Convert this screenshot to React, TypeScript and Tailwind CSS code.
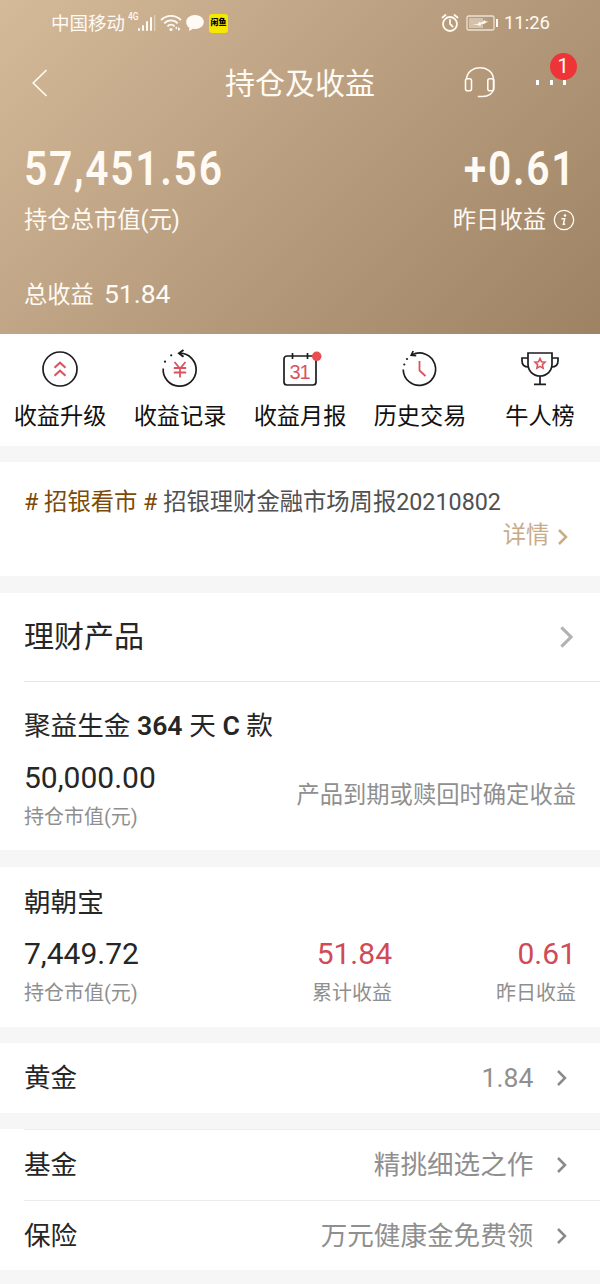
import type { ReactNode } from "react";

const INK = "#1d1d1f";
const RED = "#d9535f";

function Chevron({ className, size = 16, width = 2 }: { className?: string; size?: number; width?: number }) {
  return (
    <svg
      className={className}
      width={size * 0.6}
      height={size}
      viewBox="0 0 9.6 16"
      fill="none"
      stroke="currentColor"
      strokeWidth={width}
    >
      <path d="M1 1l7 7-7 7" />
    </svg>
  );
}

function StatusBar() {
  return (
    <div className="flex h-[46px] items-center justify-between pl-[51px] pr-[50px]">
      <div className="flex items-center">
        <span className="mt-[2px] text-[18.5px] leading-[24px]">中国移动</span>
        <span className="ml-[3px] -mt-[12px] w-[11px] origin-left scale-x-[.85] text-[10px] font-medium leading-[10px]">4G</span>
        <svg className="-ml-[2px]" width="19" height="18" viewBox="0 0 19 18" fill="currentColor">
          <rect x="1" y="14" width="2" height="3" rx="1" />
          <rect x="5" y="11" width="2" height="6" rx="1" />
          <rect x="9" y="7" width="2" height="10" rx="1" />
          <rect x="13" y="3" width="2" height="14" rx="1" />
          <rect x="17" y="1" width="1.4" height="16" opacity="0.4" />
        </svg>
        <svg className="ml-[4px]" width="22" height="18" viewBox="0 0 22 18" fill="none" stroke="currentColor" strokeWidth="1.8">
          <path d="M1 6.200C6.500.5 15.500.5 21 6.200" />
          <path d="M4.300 9.300C8 5.500 14 5.500 17.700 9.300" />
          <path d="M7.400 12.300C9.500 10.200 12.500 10.200 14.600 12.300" />
          <circle cx="11" cy="15.500" r="1.600" fill="currentColor" stroke="none" />
          <path d="M15 14l2-1.500v3zM18 13l2.500 2-2.500 2z" fill="currentColor" stroke="none" />
        </svg>
        <svg className="ml-[4px]" width="18" height="18" viewBox="0 0 18 18" fill="currentColor">
          <path d="M9 1c5 0 8.800 3 8.800 7s-3.800 7-8.800 7c-.8 0-1.600-.1-2.300-.2-1 1-2.400 1.700-4 2 .6-1 .8-2 .6-3C1.300 12.500.2 10.400.2 8 .2 4 4 1 9 1z" />
        </svg>
        <span className="ml-[5px] flex h-[19px] w-[19px] items-center justify-center rounded-[3px] bg-[#f7e600] text-[8px] font-black leading-none text-black">
          闲鱼
        </span>
      </div>
      <div className="flex items-center">
        <svg width="18" height="19" viewBox="0 0 18 19" fill="none" stroke="currentColor" strokeWidth="1.800" strokeLinecap="round">
          <circle cx="9" cy="10" r="7" />
          <path d="M9 6v4l2.500 2.500M1.500 3.500l3-2.500M16.500 3.500l-3-2.500" />
        </svg>
        <svg className="ml-[7px]" width="33" height="17" viewBox="0 0 33 17" fill="none">
          <rect x="1" y="1" width="27" height="14" rx="1.500" stroke="currentColor" strokeWidth="1.300" opacity="0.75" />
          <rect x="3" y="3" width="14" height="10" fill="currentColor" opacity="0.4" />
          <path d="M6 9h6l1-2 2 .8 4-2.800.5 1.500h3l-5 2.500-2-.3-1.500 2.300-2-1z" fill="currentColor" />
          <rect x="30" y="4" width="2" height="8" fill="currentColor" />
        </svg>
        <span className="ml-[5px] text-[18.5px] leading-[24px]">11:26</span>
      </div>
    </div>
  );
}

function NavBar() {
  return (
    <div className="relative flex h-[74px] items-center justify-between pl-[32px] pr-[34px]">
      <svg width="16" height="28" viewBox="0 0 16 28" fill="none" stroke="currentColor" strokeWidth="1.700">
        <path d="M14.500 1L1.200 14l13.300 13" />
      </svg>
      <h1 className="absolute inset-x-0 mt-[2px] text-center text-[30px] leading-[40px]">持仓及收益</h1>
      <div className="flex items-center">
        <svg className="-mt-[2px]" width="32" height="32" viewBox="0 0 32 32" fill="none" stroke="currentColor" strokeWidth="1.600">
          <path d="M2.500 13C3 6.500 8.500 1.800 16 1.800S29 6.500 29.500 13v10c-.5 4.500-5 7.500-11 7.500h-4.700" />
          <rect x="1.500" y="12.700" width="6" height="12" rx="2" />
          <rect x="23.800" y="12.700" width="6" height="12" rx="2" />
        </svg>
        <div className="relative -mt-[2px] ml-[40px] flex gap-[10.500px]">
          <i className="h-[5px] w-[3px] bg-white" />
          <i className="ml-[.5px] h-[5px] w-[3px] bg-white" />
          <i className="h-[5px] w-[3px] bg-white" />
          <span className="absolute -top-[27px] left-[14px] flex h-[27px] w-[27px] items-center justify-center rounded-full bg-[#ee3437] text-[20px] leading-none">
            1
          </span>
        </div>
      </div>
    </div>
  );
}

function Header() {
  return (
    <header className="h-[334px] bg-[linear-gradient(135deg,#d5ba99_0%,#b99f80_48%,#9d8263_100%)] text-[#fffaf3]">
      <StatusBar />
      <NavBar />
      <div className="mt-[25px] flex h-12 items-center justify-between px-6 text-[48px] font-semibold leading-[48px]">
        <span className="origin-left scale-x-[.85] tracking-[2px]">57,451.56</span>
        <span className="origin-right scale-x-[.85] tracking-[2px]">+0.61</span>
      </div>
      <div className="mt-[11px] flex h-8 items-center justify-between pl-6 pr-[25px] text-[23.300px] leading-8">
        <span>持仓总市值(元)</span>
        <span className="flex items-center">
          昨日收益
          <svg className="ml-[7px]" width="22" height="22" viewBox="0 0 22 22">
            <circle cx="11" cy="11" r="9.700" fill="none" stroke="currentColor" strokeWidth="1.300" />
            <circle cx="12" cy="6.500" r="1.300" fill="currentColor" />
            <path d="M8.500 9.700h3.200l-1.300 5.600h1.800" fill="none" stroke="currentColor" strokeWidth="1.500" />
          </svg>
        </span>
      </div>
      <div className="mt-[43px] flex h-8 items-center px-6 leading-8">
        <span className="text-[23.300px]">总收益</span>
        <span className="-mt-[2px] ml-[10px] text-[26.500px]">51.84</span>
      </div>
    </header>
  );
}

function Icon({ children }: { children: ReactNode }) {
  return (
    <svg className="overflow-visible" width="40" height="40" viewBox="0 0 40 40" fill="none" stroke={INK} strokeWidth="1.700">
      {children}
    </svg>
  );
}

const ENTRIES: { label: string; icon: ReactNode }[] = [
  {
    label: "收益升级",
    icon: (
      <Icon>
        <circle cx="20" cy="20" r="17" />
        <path d="M14.500 18.700L20 13.700l5.500 5M14.500 26.700l5.500-5 5.500 5" stroke={RED} strokeWidth="2" />
      </Icon>
    ),
  },
  {
    label: "收益记录",
    icon: (
      <Icon>
        <path d="M3.200 19.500A16.500 16.500 0 1 0 20 4.200" />
        <path d="M23.500 1L19 4.200l4.500 3.600" strokeWidth="2" />
        <path d="M14.500 13l5.500 6.500 5.500-6.500M20 19.500v9M13.800 19h12.400M13.800 23.500h12.400" stroke={RED} strokeWidth="1.800" />
        <circle cx="5" cy="12.700" r="1.100" fill={INK} stroke="none" />
        <circle cx="11.200" cy="6.300" r="1.100" fill={INK} stroke="none" />
      </Icon>
    ),
  },
  {
    label: "收益月报",
    icon: (
      <Icon>
        <rect x="4" y="7" width="32" height="29" rx="3" />
        <path d="M12.500 4v6M27.500 4v6" />
        <text className="font-['Liberation_Sans',sans-serif]" x="19.500" y="29.500" textAnchor="middle" fontSize="20" letterSpacing="-1" fill={RED} stroke="none">
          31
        </text>
        <circle cx="36.700" cy="7.300" r="4.800" fill="#e84f50" stroke="none" />
      </Icon>
    ),
  },
  {
    label: "历史交易",
    icon: (
      <Icon>
        <path d="M3.200 20.500A16.200 16.200 0 1 0 12 5.800" />
        <path d="M13.200 2L11.200 6.300l5 .3" />
        <path d="M19.500 12v9.500l6 5.500" stroke={RED} strokeWidth="1.800" />
        <circle cx="4.300" cy="15.500" r="1.100" fill={INK} stroke="none" />
        <circle cx="7" cy="10" r="1.100" fill={INK} stroke="none" />
      </Icon>
    ),
  },
  {
    label: "牛人榜",
    icon: (
      <Icon>
        <path d="M8 4h24v11c0 7-5 12-12 12S8 22 8 15zM20 27v8M14 35.300h12" />
        <path d="M8 9H2v3c0 4 2.500 6 6.500 6M32 9h6v3c0 4-2.500 6-6.500 6" />
        <path d="M20 9.500l1.500 3.300 3.500.4-2.600 2.400.7 3.600-3.100-1.800-3.100 1.800.7-3.600-2.600-2.400 3.500-.4z" stroke={RED} strokeWidth="1.600" />
      </Icon>
    ),
  },
];

function Metric({ value, label, className }: { value: string; label: string; className?: string }) {
  return (
    <div className={className}>
      <p className="text-[30px] leading-[40px]">{value}</p>
      <p className="mt-[5px] text-[20px] leading-[28px] text-[#8f8f8f]">{label}</p>
    </div>
  );
}

function Row({ title, value }: { title: string; value: string }) {
  return (
    <div className="flex h-[70px] items-center pl-6 pr-[33px] text-[26.600px] leading-[36px]">
      <span>{title}</span>
      <span className="ml-auto text-[#8f8f8f]">{value}</span>
      <Chevron className="ml-[24px] text-[#8a8a8a]" size={16} width={2.5} />
    </div>
  );
}

export default function App() {
  return (
    <div className="flex h-[1284px] w-[600px] flex-col overflow-hidden bg-[#f6f6f6] font-[Roboto,'Noto_Sans_CJK_SC',sans-serif] text-[#262626]">
      <Header />

      <nav className="grid h-[112px] grid-cols-5 bg-white pt-[15px]">
        {ENTRIES.map((e) => (
          <div key={e.label} className="flex flex-col items-center">
            {e.icon}
            <span className="mt-[11px] text-[23.200px] leading-[32px] text-[#111]">{e.label}</span>
          </div>
        ))}
      </nav>

      <section className="mt-4 h-[114px] bg-white pl-6 pr-[32px] pt-[24px] text-[23.300px] leading-[33px]">
        <p className="whitespace-nowrap text-[#505050]">
          <span className="text-[#7c4a08]"># 招银看市 #</span> 招银理财金融市场周报20210802
        </p>
        <p className="flex items-center justify-end text-[#c9ab88]">
          详情
          <Chevron className="ml-[9px] mt-[2px]" size={16} width={2.5} />
        </p>
      </section>

      <section className="mt-[17px] h-[257px] bg-white">
        <div className="flex h-[88px] items-center justify-between pl-6 pr-[27px]">
          <h2 className="text-[30px] leading-[40px]">理财产品</h2>
          <Chevron className="text-[#b2b2b2]" size={22} width={2.2} />
        </div>
        <div className="ml-6 h-px bg-[#e6e6e6]" />
        <div className="pl-6 pr-6 pt-[26px]">
          <h3 className="text-[26.600px] leading-[36px]">
            聚益生金 <b className="font-semibold">364</b> 天 <b className="font-semibold">C</b> 款
          </h3>
          <div className="mt-[14px] flex items-center justify-between">
            <Metric value="50,000.00" label="持仓市值(元)" />
            <span className="text-[23.300px] leading-[32px] text-[#8f8f8f]">产品到期或赎回时确定收益</span>
          </div>
        </div>
      </section>

      <section className="mt-[17px] h-[160px] bg-white px-6 pt-[18px]">
        <h3 className="text-[26.600px] leading-[36px]">朝朝宝</h3>
        <div className="mt-[13px] grid grid-cols-3">
          <Metric value="7,449.72" label="持仓市值(元)" />
          <Metric value="51.84" label="累计收益" className="text-right text-[#d04a58]" />
          <Metric value="0.61" label="昨日收益" className="text-right text-[#d04a58]" />
        </div>
      </section>

      <section className="mt-4 bg-white">
        <Row title="黄金" value="1.84" />
      </section>

      <section className="mt-4 h-[141px] bg-white">
        <div className="ml-6 h-px bg-[#ececec]" />
        <Row title="基金" value="精挑细选之作" />
        <div className="ml-6 h-px bg-[#ebebeb]" />
        <Row title="保险" value="万元健康金免费领" />
      </section>
    </div>
  );
}
